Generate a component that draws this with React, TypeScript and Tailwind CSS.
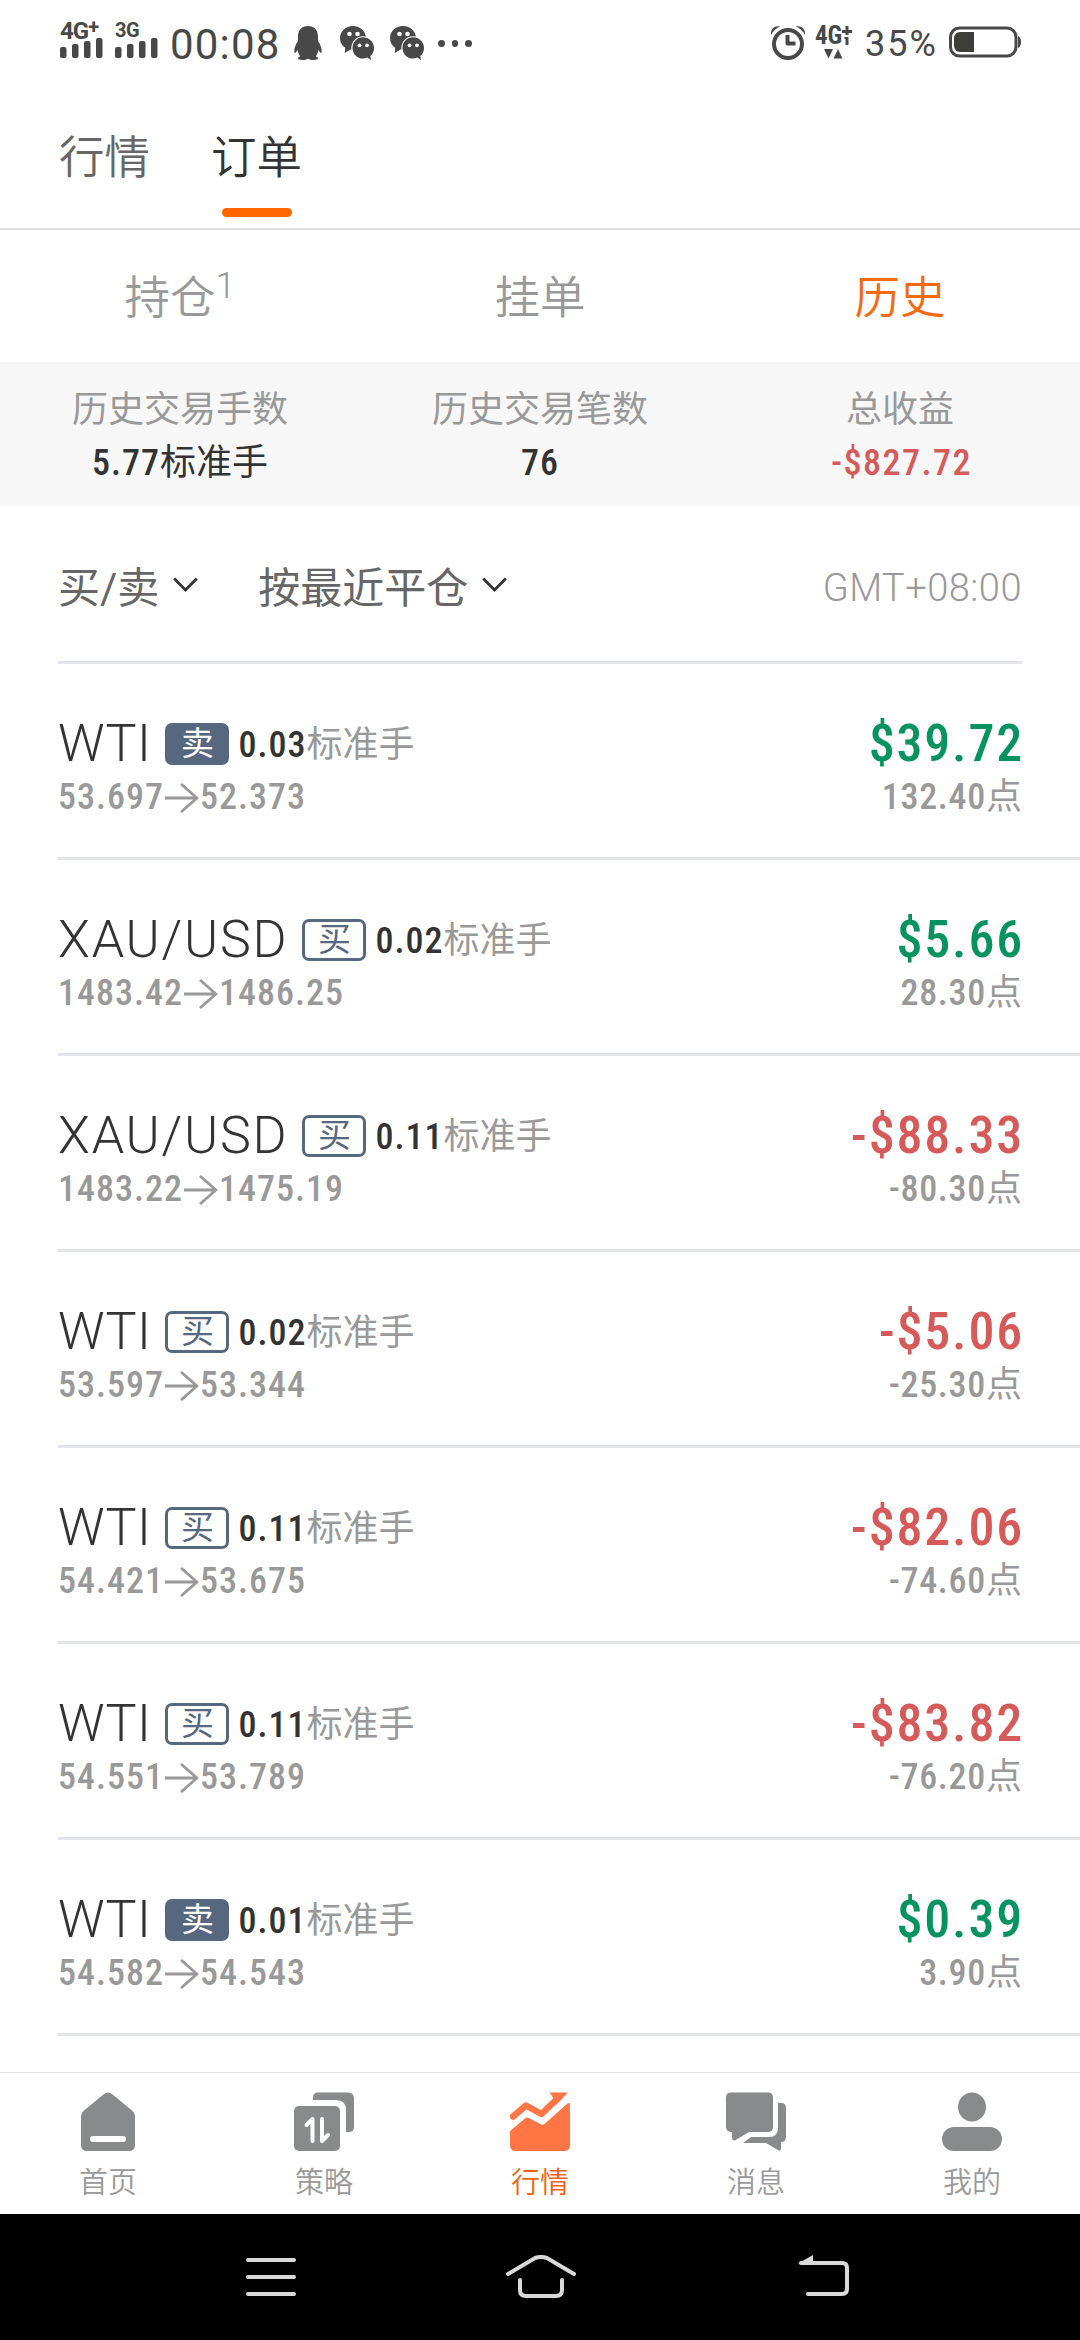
import React from 'react';

interface Order {
  symbol: string;
  side: 'buy' | 'sell';
  lots: string;
  open: string;
  close: string;
  profit: string;
  points: string;
}

const ORDERS: Order[] = [
  { symbol: 'WTI', side: 'sell', lots: '0.03', open: '53.697', close: '52.373', profit: '$39.72', points: '132.40' },
  { symbol: 'XAU/USD', side: 'buy', lots: '0.02', open: '1483.42', close: '1486.25', profit: '$5.66', points: '28.30' },
  { symbol: 'XAU/USD', side: 'buy', lots: '0.11', open: '1483.22', close: '1475.19', profit: '-$88.33', points: '-80.30' },
  { symbol: 'WTI', side: 'buy', lots: '0.02', open: '53.597', close: '53.344', profit: '-$5.06', points: '-25.30' },
  { symbol: 'WTI', side: 'buy', lots: '0.11', open: '54.421', close: '53.675', profit: '-$82.06', points: '-74.60' },
  { symbol: 'WTI', side: 'buy', lots: '0.11', open: '54.551', close: '53.789', profit: '-$83.82', points: '-76.20' },
  { symbol: 'WTI', side: 'sell', lots: '0.01', open: '54.582', close: '54.543', profit: '$0.39', points: '3.90' },
];

const SignalBars = () => (
  <svg width="43" height="20" viewBox="0 0 43 20" fill="#484848" className="block">
    <rect x="0" y="9" width="6.5" height="11" rx="2" />
    <rect x="12" y="6" width="6.5" height="14" rx="2" />
    <rect x="24" y="3" width="6.5" height="17" rx="2" />
    <rect x="36" y="0" width="6.5" height="20" rx="2" />
  </svg>
);

const QQIcon = () => (
  <svg width="28" height="34" viewBox="0 0 28 34" fill="#484848" className="block">
    <path d="M14 0C8 0 4 4 4 10.500V15C2 18 .3 21.500.3 25c0 2 .8 2.500 1.600 1.200L3.700 24c.4 2.800 1.300 4.800 2.600 6.500-1.500.4-2.300 1-2.300 1.800 0 1 1.500 1.700 4.500 1.700 2.300 0 4-.5 5.500-1.300 1.500.8 3.200 1.300 5.500 1.300 3 0 4.500-.7 4.500-1.700 0-.8-.8-1.400-2.300-1.800 1.300-1.700 2.200-3.700 2.600-6.500l1.800 2.200c.8 1.300 1.600.8 1.600-1.200 0-3.500-1.700-7-3.700-10v-4.500C24 4 20 0 14 0z" />
  </svg>
);

const WeChatIcon = () => (
  <svg width="34" height="34" viewBox="0 0 34 34" fill="#484848" className="block">
    <path d="M13 0C5.800 0 0 5.400 0 12.200c0 4 2 7.400 5.200 9.600L4.800 27l5.700-3.400h.9A11.800 11.800 0 0 1 23 10.200q1.700 0 2.900.3C25 4.200 19.500 0 13 0z" />
    <path d="M23 11.300c-6 0-10.500 4.800-10.500 10.600S17 32.500 23 32.500c1.600 0 3-.3 4.300-.9L31 34l-.7-4c2.300-2 3.700-4.800 3.700-8.100 0-5.800-5-10.600-11-10.600z" />
    <g fill="#fff">
      <circle cx="9.500" cy="8" r="2.300" />
      <circle cx="17.500" cy="8" r="2.300" />
      <circle cx="19.500" cy="19.300" r="1.900" />
      <circle cx="27" cy="19.300" r="1.900" />
    </g>
  </svg>
);

const AlarmIcon = () => (
  <svg width="36" height="36" viewBox="0 0 36 36" fill="none" className="block">
    <circle cx="18" cy="19" r="14" stroke="#484848" strokeWidth="4" />
    <path d="M17.500 10v8.500h8" stroke="#484848" strokeWidth="4" strokeLinejoin="round" />
    <path d="M1 10C.5 4 4.500.500 10 1.500 6 3.500 3 6 1 10zM35 10c.5-6-3.500-9.500-9-8.500 4 2 7 4.500 9 8.500z" fill="#484848" />
  </svg>
);

const BatteryIcon = () => (
  <svg width="73" height="32" viewBox="0 0 73 32" fill="none" className="block">
    <rect x="1.500" y="2" width="65.500" height="28" rx="9" stroke="#484848" strokeWidth="3" />
    <path d="M11 6h14v20H11a6 6 0 0 1-6-6v-8a6 6 0 0 1 6-6z" fill="#3e3e38" />
    <path d="M69 10c4 1 4 11 0 12z" fill="#484848" />
  </svg>
);

const StatusBar = () => (
  <div className="flex h-[84px] items-start justify-between pl-[60px] pr-[58px] text-[#484848]">
    <div className="flex">
      <div className="mt-[20px] w-[44px]">
        <div className="h-[18px] whitespace-nowrap text-[24px] font-bold leading-[22px] tracking-[-1px]">4G<span className="relative -top-[5px] text-[20px]">+</span></div>
        <SignalBars />
      </div>
      <div className="ml-[11px] mt-[20px] w-[44px]">
        <div className="h-[18px] whitespace-nowrap text-[20px] font-bold leading-[20px] tracking-[-0.5px]">3G</div>
        <SignalBars />
      </div>
      <div className="ml-[11px] mt-[22px] w-[110px] whitespace-nowrap text-[42px] leading-[46px] tracking-[1.2px]">00:08</div>
      <div className="ml-[14px] mt-[26px]"><QQIcon /></div>
      <div className="ml-[18px] mt-[26px]"><WeChatIcon /></div>
      <div className="ml-[16px] mt-[26px]"><WeChatIcon /></div>
      <div className="ml-[14px] mt-[40px] flex gap-[7px]">
        <i className="size-[6.5px] rounded-full bg-[#484848]" />
        <i className="size-[6.5px] rounded-full bg-[#484848]" />
        <i className="size-[6.5px] rounded-full bg-[#484848]" />
      </div>
    </div>
    <div className="flex">
      <div className="mt-[25px]"><AlarmIcon /></div>
      <div className="ml-[9px] mt-[24px] w-[38px]">
        <div className="flex h-[24px] text-[25px] font-bold leading-[24px] tracking-[-0.2px] [font-stretch:85%]">
          4G
          <svg width="10" height="19" viewBox="0 0 10 19" className="mt-[2px] shrink-0" fill="#484848">
            <path d="M3.500 0h3v4H10v3H6.500v2h-3V7H0V4h3.500zM2.500 11h4v8h-3v-6h-1z" />
          </svg>
        </div>
        <svg width="19" height="10" viewBox="0 0 19 10" className="ml-[9px] mt-[1px] block" fill="#484848">
          <path d="M0 0h9L4.500 9.500zM9.500 9.500h9L14 0z" />
        </svg>
      </div>
      <div className="ml-[12px] mt-[24px] w-[76px] whitespace-nowrap text-[36px] leading-[40px] tracking-[2px]">35%</div>
      <div className="ml-[8px] mt-[26px]"><BatteryIcon /></div>
    </div>
  </div>
);

const Chevron = () => (
  <svg width="25" height="16" viewBox="0 0 25 16" fill="none" stroke="#333" strokeWidth="2.800" className="block">
    <path d="M1.200 1.500l11.300 11.500L23.800 1.500" />
  </svg>
);

const Arrow = () => (
  <svg width="34" height="30" viewBox="0 0 34 30" fill="none" stroke="#999" strokeWidth="2.800" className="ml-[1px] mr-[1px] mt-[3px] block">
    <path d="M0 15h32M16 1l16 14-16 14" />
  </svg>
);

const OrderRow: React.FC<{ order: Order }> = ({ order }) => {
  const loss = order.profit.startsWith('-');
  const isPair = order.symbol.includes('/');

  return (
    <div className="ml-[58px] flex h-[196px] justify-between border-b-[3px] border-[#e4e5ea] pr-[58px] pt-[53px]">
      <div>
        <div className="flex h-[53px] items-center whitespace-nowrap">
          <span className={`text-[52px] font-[330] leading-[53px] text-[#333] ${isPair ? 'tracking-[1.8px]' : 'tracking-[0.5px]'}`}>
            {order.symbol}
          </span>
          <span
            className={`ml-[14px] flex h-[42px] w-[64px] items-center justify-center rounded-[7px] border-[3px] border-[#576780] text-[33px] leading-none ${
              order.side === 'sell' ? 'bg-[#576780] text-white' : 'text-[#576780]'
            }`}
          >
            {order.side === 'sell' ? '卖' : '买'}
          </span>
          <span className="ml-[9px] pt-[2px] text-[36px] font-medium tracking-[1px] text-[#333] [font-stretch:85%]">{order.lots}</span>
          <span className="pt-[2px] text-[36px] text-[#999]">标准手</span>
        </div>
        <div className="flex h-[53px] items-center text-[36px] font-medium tracking-[1px] text-[#999] [font-stretch:85%]">
          {order.open}
          <Arrow />
          {order.close}
        </div>
      </div>
      <div className="text-right">
        <div className={`-mr-[2px] h-[53px] text-[52px] font-medium leading-[53px] tracking-[1.8px] [font-stretch:85%] ${loss ? 'text-[#d65a5a]' : 'text-[#07935f]'}`}>
          {order.profit}
        </div>
        <div className="h-[53px] text-[36px] leading-[55px] text-[#999]">
          <span className="font-medium tracking-[0.7px] [font-stretch:85%]">{order.points}</span>点
        </div>
      </div>
    </div>
  );
};

const HomeIcon = () => (
  <svg width="60" height="60" viewBox="0 0 60 60" className="block">
    <path d="M26 2Q30-1 34 2L54 18.500Q57 21 57 24V53Q57 59 51 59H9Q3 59 3 53V24Q3 21 6 18.500Z" fill="#898a8c" />
    <rect x="12" y="44" width="36" height="6" rx="3" fill="#fff" />
  </svg>
);

const StrategyIcon = () => (
  <svg width="60" height="60" viewBox="0 0 60 60" className="block">
    <rect x="0" y="14" width="46" height="45" rx="5" fill="#898a8c" />
    <path d="M19 8V5.500Q19 .5 24 .5H54Q60 .5 60 6.500V35Q60 40 55 40H52V18Q52 8 42 8Z" fill="#898a8c" />
    <path d="M12.500 33l6-6v22M28 27v22l6-6" fill="none" stroke="#fff" strokeWidth="4" strokeLinecap="round" strokeLinejoin="round" />
  </svg>
);

const QuotesIcon = () => (
  <svg width="60" height="60" viewBox="0 0 60 60" className="block" fill="#ff7544">
    <path d="M0 39L15 26.500q2-1.500 4-.5l12 6.500q2 1 4-1L57.500 11.500Q60 10 60 13V53q0 6-6 6H6q-6 0-6-6z" />
    <path d="M3 24.500L16 13.500l15.500 8.500L48 6" fill="none" stroke="#ff7544" strokeWidth="6.500" strokeLinecap="round" strokeLinejoin="round" />
    <path d="M39.500 .5H58L46 13l-2-6z" />
  </svg>
);

const MessageIcon = () => (
  <svg width="60" height="60" viewBox="0 0 60 60" className="block" fill="#898a8c">
    <path d="M5 .5H42Q47 .5 47 5.500V35Q47 40 42 40H23L9 48.500Q6 49 6 46V40Q0 40 0 35V5.500Q0 .5 5 .5Z" />
    <path d="M52 11h3q5 0 5 5V45q0 5-5 5v6q0 4-3 2L40 51H17l8-6H43q9 0 9-9z" />
  </svg>
);

const MineIcon = () => (
  <svg width="60" height="60" viewBox="0 0 60 60" className="block" fill="#898a8c">
    <ellipse cx="30" cy="15" rx="14" ry="14.500" />
    <rect x="0" y="35" width="60" height="24" rx="12" />
  </svg>
);

const NAV = [
  { label: '首页', icon: <HomeIcon /> },
  { label: '策略', icon: <StrategyIcon /> },
  { label: '行情', icon: <QuotesIcon />, active: true },
  { label: '消息', icon: <MessageIcon /> },
  { label: '我的', icon: <MineIcon /> },
];

const App: React.FC = () => {
  return (
    <div className="flex h-[2340px] w-[1080px] flex-col overflow-hidden bg-white font-['Roboto','Noto_Sans_CJK_SC',sans-serif]">
      <StatusBar />

      <div className="flex h-[146px] gap-[61px] border-b-2 border-[#dcdce1] pl-[59px] text-[45.5px] font-[350]">
        <div className="pt-[42px] leading-[66px] text-[#666]">行情</div>
        <div className="flex flex-col items-center pt-[42px] leading-[66px] text-[#333]">
          订单
          <span className="mt-[16px] h-[9px] w-[70px] rounded-full bg-[#ff6600]" />
        </div>
      </div>

      <div className="grid h-[132px] grid-cols-3 text-center text-[45.5px] font-[350] leading-[138px] text-[#999]">
        <div>
          持仓<span className="relative -top-[16px] text-[36px] font-light">1</span>
        </div>
        <div>挂单</div>
        <div className="text-[#f56a10]">历史</div>
      </div>

      <div className="grid h-[144px] grid-cols-3 bg-[#f7f7f7] pt-[22px] text-center text-[36px] leading-[53px] text-[#999]">
        <div>
          历史交易手数
          <div className="text-[#333]"><span className="font-medium tracking-[1px] [font-stretch:85%]">5.77</span>标准手</div>
        </div>
        <div>
          历史交易笔数
          <div className="font-medium tracking-[1px] text-[#333] [font-stretch:85%]">76</div>
        </div>
        <div>
          总收益
          <div className="pl-[3px] font-medium tracking-[1.5px] text-[#d65a5a] [font-stretch:85%]">-$827.72</div>
        </div>
      </div>

      <div className="mx-[58px] flex h-[158px] items-center border-b-[3px] border-[#e4e5ea] text-[42px] text-[#666]">
        <span className="pt-[10px]">买/卖</span>
        <span className="ml-[14px] pt-[3px]"><Chevron /></span>
        <span className="ml-[60px] pt-[10px]">按最近平仓</span>
        <span className="ml-[14px] pt-[3px]"><Chevron /></span>
        <span className="ml-auto pt-[9px] text-[38px] font-light tracking-[0.5px] text-[#999]">GMT+08:00</span>
      </div>

      <div className="h-[1408px] overflow-hidden">
        {ORDERS.map((order, i) => (
          <OrderRow key={i} order={order} />
        ))}
      </div>

      <div className="grid h-[142px] grid-cols-5 border-t border-[#e3e3e3]">
        {NAV.map(({ label, icon, active }) => (
          <div key={label} className="flex flex-col items-center pt-[19px]">
            {icon}
            <span className={`mt-[10px] text-[29px] font-[350] leading-[42px] ${active ? 'text-[#f0640f]' : 'text-[#999]'}`}>{label}</span>
          </div>
        ))}
      </div>

      <div className="flex h-[126px] items-start bg-black pl-[246px] pt-[41px]">
        <svg width="50" height="44" viewBox="0 0 50 44" stroke="#d9d9d9" strokeWidth="4" strokeLinecap="round">
          <path d="M2 5h46M2 22h46M2 39h46" />
        </svg>
        <svg width="70" height="44" viewBox="0 0 70 44" fill="none" stroke="#d9d9d9" strokeWidth="4" strokeLinecap="round" className="ml-[210px]">
          <path d="M2 19L29 3q6-2 12 0L68 19M14 25v10q0 6 6 6H50q6 0 6-6V25" />
        </svg>
        <svg width="52" height="44" viewBox="0 0 52 44" fill="none" stroke="#d9d9d9" strokeWidth="4" strokeLinecap="round" className="ml-[222px]">
          <path d="M3 8H44q5 0 5 5V34q0 5-5 5H10" />
          <path d="M0 8.500L15 0v9z" fill="#d9d9d9" stroke="none" />
        </svg>
      </div>
    </div>
  );
};

export default App;
